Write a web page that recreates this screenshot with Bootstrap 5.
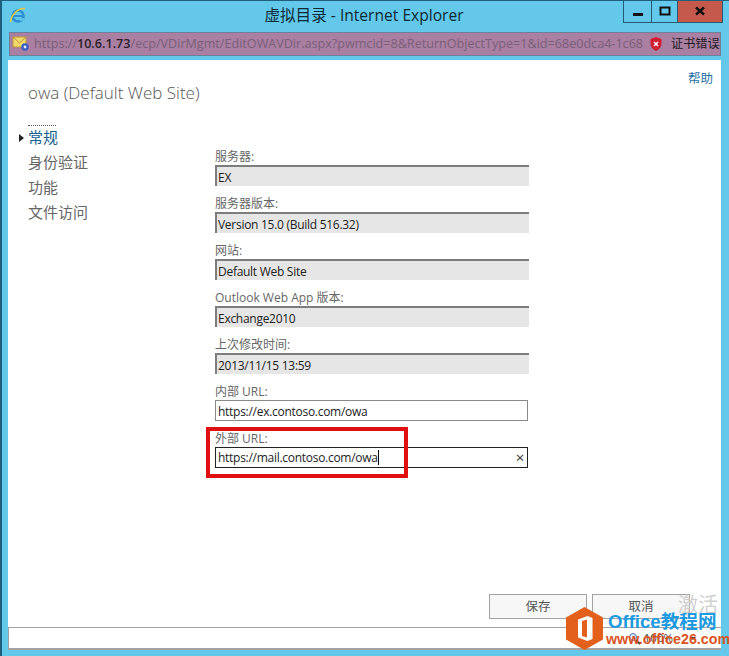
<!DOCTYPE html>
<html lang="zh-CN">
<head>
<meta charset="utf-8">
<title>虚拟目录 - Internet Explorer</title>
<link href="https://cdn.jsdelivr.net/npm/bootstrap@5.3.0/dist/css/bootstrap.min.css" rel="stylesheet">
<style>
html,body{margin:0;height:656px;overflow:hidden;background:#63c8ea}
body{font-family:"Open Sans","Noto Sans CJK SC",sans-serif;color:#333}
.ie-win{position:relative;width:729px;height:656px;background:#63c8ea;box-shadow:inset 2px 1px 0 #1d5f7c;overflow:hidden}
.ie-title{height:32px;flex:none}
.ie-side{flex:1 1 0}
.ie-logo{padding:6px 0 0 9px}
.ie-caption{font-size:15.6px;line-height:30px;color:#0c2a38;flex:none;margin-right:10px}
.ie-ctrls{width:100px;height:22px;margin:1px 6px 0 0;border:1px solid #245a72;border-top:0}
.ie-ctrl{border-right:1px solid #245a72;height:21px}
.ie-ctrl.w1{width:28px}.ie-ctrl.w2{width:26px}
.ie-close{flex:1;background:#c5594c;height:21px}
.ie-addr{height:24px;flex:none;margin:0 8px 0 9px;background:#a97fa2;border:1px solid #6f7f97;font-size:12.6px;line-height:22px;color:#7a6079;white-space:nowrap;overflow:hidden}
.ie-url{width:611px;overflow:hidden;flex:none}
.ie-url b{color:#2b1f2a;font-weight:600}
.ie-cert{font-size:12.2px;color:#241a24}
.ie-page{flex:1;margin:4px 8px 6px 8px;background:#fff;min-height:0}
.ie-main{flex:1;min-height:0;padding:0 0 0 20px}
.ie-help{font-size:12.5px;line-height:16px;color:#1f6fa5;text-decoration:none;margin:11px 8px 0 0;align-self:flex-end}
.ie-h{font-size:17px;line-height:24px;color:#555;margin:-6px 0 0 0;font-weight:300;height:24px}
.ie-nav{width:187px;flex:none;margin-top:20px;font-size:15px}
.ie-nav a{display:block;color:#666;line-height:25px;text-decoration:none;position:relative}
.ie-nav a.on{color:#14608f}
.ie-nav a.on::before{content:"";position:absolute;left:-9px;top:9px;border-left:5px solid #222;border-top:4px solid transparent;border-bottom:4px solid transparent}
.ie-nav a.on::after{content:"";position:absolute;left:0;top:0;width:28px;border-top:1px dotted #555}
.ie-form{width:315px;margin-top:43px}
.ie-label{display:block;font-size:12px;line-height:17px;height:17px;color:#666;margin:0}
.ie-field{height:21px;margin-bottom:9px;font-size:12px;letter-spacing:-.28px;padding-left:2px;color:#222;white-space:nowrap}
.ie-ro{background:#e6e6e6;border-top:2px solid #7d7d7d;border-left:2px solid #7d7d7d;line-height:21px;padding-left:1px;width:314px}
.ie-edit{border:1px solid #8a8a8a;background:#fff;width:313px;line-height:22px}
.ie-active{border-color:#222;position:relative;display:flex;justify-content:space-between;line-height:20px}
.ie-caret{display:inline-block;width:1px;height:15px;background:#000;vertical-align:-3px}
.ie-x{font-size:15px;line-height:19px;padding-right:3px;color:#333}
.ie-foot{height:33px;padding:0 31px 0 0;flex:none}
.ie-btn{width:98px;height:25px;background:#f7f7f7;border:1px solid #a3a3a3;border-radius:0;font-size:12.5px;line-height:22px;color:#555;padding:0;margin-left:5px}
.ie-status{height:23px;border-top:1px solid #a3a3a3;border-left:1px solid #a3a3a3;border-bottom:2px solid #a3a3a3;flex:none;font-size:11.5px;color:#444;padding-right:25px;line-height:22px}
.ie-pct{margin:0 17px 0 3px}
.ie-drop{width:0;height:0;border-top:3px solid #222;border-left:3px solid transparent;border-right:3px solid transparent}
.ie-redbox{position:absolute;left:206px;top:427px;width:202px;height:51px;border:4px solid #e01010;pointer-events:none}
.ie-wm{position:absolute;left:678px;top:593px;font-size:20px;line-height:24px;color:#d0d0d0;white-space:nowrap}
.ie-logo-mark{position:absolute;left:566px;top:607px}
.ie-brand{position:absolute;left:608px;top:612px;font-size:18.600px;line-height:20px;font-weight:700;color:#1e9ae0;white-space:nowrap;font-family:"Liberation Sans","Noto Sans CJK SC",sans-serif}
.ie-site{position:absolute;left:606px;top:631px;font-size:14.3px;line-height:16px;font-weight:700;color:#d9541e;white-space:nowrap;font-family:"Liberation Sans",sans-serif}
</style>
</head>
<body>
<div class="ie-win d-flex flex-column">
  <div class="ie-title d-flex align-items-start">
    <div class="ie-side ie-logo">
      <svg class="d-block" width="18" height="20" viewBox="0 0 18 20"><ellipse cx="9" cy="10" rx="5.500" ry="5.500" fill="none" stroke="#2d8fd0" stroke-width="2.600"/><path d="M4 10h10" stroke="#2d8fd0" stroke-width="2"/><path d="M1.500 16C2 10 8 2 16 2.500" fill="none" stroke="#e8c640" stroke-width="1.600"/><path d="M11 14l4-1" stroke="#63c8ea" stroke-width="2"/></svg>
    </div>
    <div class="ie-caption text-center">虚拟目录 - Internet Explorer</div>
    <div class="ie-side d-flex justify-content-end">
      <div class="ie-ctrls d-flex">
        <div class="ie-ctrl w1 d-flex align-items-center justify-content-center"><svg width="12" height="12"><rect x="1" y="7" width="10" height="3" fill="#111"/></svg></div>
        <div class="ie-ctrl w2 d-flex align-items-center justify-content-center"><svg width="12" height="12"><rect x="1.500" y="1.500" width="9" height="7" fill="none" stroke="#111" stroke-width="2"/></svg></div>
        <div class="ie-close d-flex align-items-center justify-content-center"><svg width="12" height="12"><path d="M2 1.500l8 7M10 1.500l-8 7" stroke="#111" stroke-width="2.400"/></svg></div>
      </div>
    </div>
  </div>
  <div class="ie-addr d-flex align-items-center">
    <svg class="flex-none" width="24" height="22" viewBox="0 0 24 22"><rect x="3" y="4" width="13" height="10" fill="#f3d86b" stroke="#b99a3a"/><path d="M3 4l6.500 6 6.500-6" fill="none" stroke="#b99a3a"/><circle cx="15" cy="14" r="3.800" fill="#3c5fc0"/><circle cx="15" cy="14" r="1.400" fill="#dfe8ff"/></svg>
    <div class="ie-url">https://<b>10.6.1.73</b>/ecp/VDirMgmt/EditOWAVDir.aspx?pwmcid=8&amp;ReturnObjectType=1&amp;id=68e0dca4-1c68</div>
    <svg class="flex-none ms-1" width="14" height="16" viewBox="0 0 14 16"><path d="M7 1l5.500 2v5c0 3-2.500 5.500-5.500 7C4 13.500 1.500 11 1.500 8V3z" fill="#cf2030"/><path d="M5 6l4 4M9 6l-4 4" stroke="#fff" stroke-width="1.500"/></svg>
    <span class="ie-cert ms-2">证书错误</span>
  </div>
  <div class="ie-page d-flex flex-column">
    <a class="ie-help" href="#">帮助</a>
    <div class="ie-main d-flex flex-column">
      <h1 class="ie-h">owa (Default Web Site)</h1>
      <div class="d-flex">
        <nav class="ie-nav">
          <a class="on" href="#">常规</a>
          <a href="#">身份验证</a>
          <a href="#">功能</a>
          <a href="#">文件访问</a>
        </nav>
        <div class="ie-form">
          <span class="ie-label">服务器:</span><div class="ie-field ie-ro">EX</div>
          <span class="ie-label">服务器版本:</span><div class="ie-field ie-ro">Version 15.0 (Build 516.32)</div>
          <span class="ie-label">网站:</span><div class="ie-field ie-ro">Default Web Site</div>
          <span class="ie-label">Outlook Web App 版本:</span><div class="ie-field ie-ro">Exchange2010</div>
          <span class="ie-label">上次修改时间:</span><div class="ie-field ie-ro">2013/11/15 13:59</div>
          <span class="ie-label">内部 URL:</span><div class="ie-field ie-edit">https://ex.contoso.com/owa</div>
          <span class="ie-label">外部 URL:</span><div class="ie-field ie-edit ie-active"><span>https://mail.contoso.com/owa<i class="ie-caret"></i></span><span class="ie-x">×</span></div>
        </div>
      </div>
    </div>
    <div class="ie-foot d-flex justify-content-end align-items-start">
      <button class="ie-btn" type="button">保存</button>
      <button class="ie-btn" type="button">取消</button>
    </div>
    <div class="ie-status d-flex justify-content-end align-items-center">
      <svg width="13" height="13" viewBox="0 0 13 13"><circle cx="5" cy="5" r="3.500" fill="#dbe8f7" stroke="#4a78b8"/><path d="M8 8l4 4" stroke="#444" stroke-width="2"/></svg>
      <span class="ie-pct">100%</span>
      <span class="ie-drop"></span>
    </div>
  </div>
  <div class="ie-redbox"></div>
  <div class="ie-wm">激活</div>
  <svg class="ie-logo-mark" width="37" height="43" viewBox="0 0 37 43"><path d="M18.500 0L37 10.500v22L18.500 43 0 32.500v-22z" fill="#e2601c"/><path d="M21.500 9L12 12.500v18L21.500 34l5-2V11z" fill="#fff"/><path d="M16 14l5-1.500v18L16 29z" fill="#e2601c"/></svg>
  <div class="ie-brand">Office教程网</div>
  <div class="ie-site">www.office26.com</div>
</div>
</body>
</html>
